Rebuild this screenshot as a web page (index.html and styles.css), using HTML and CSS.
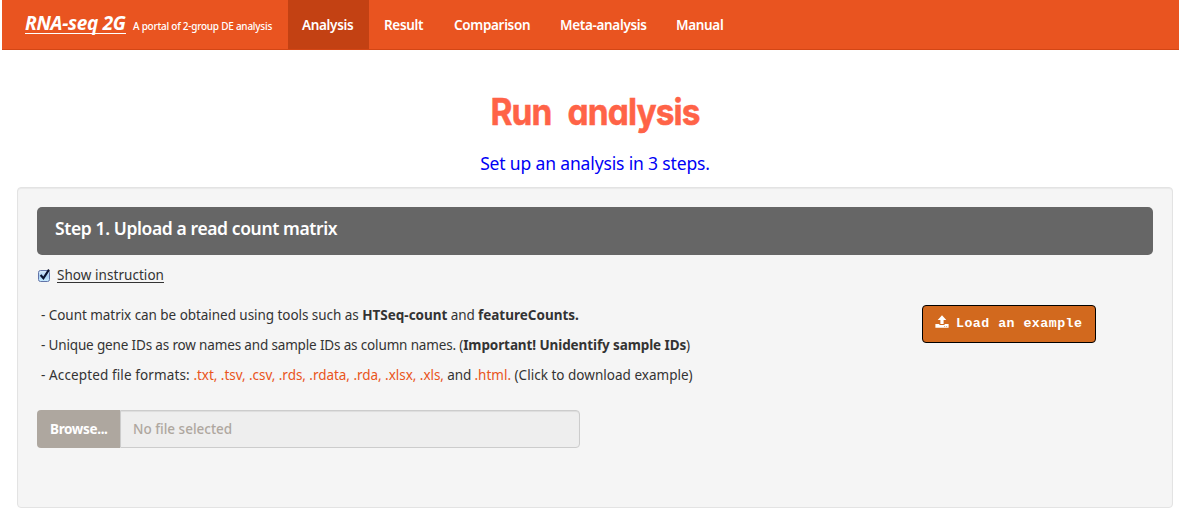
FILE: index.html
```html
<!DOCTYPE html>
<html lang="en">
<head>
<meta charset="utf-8">
<title>RNA-seq 2G</title>
<link rel="stylesheet" href="styles.css">
</head>
<body>
<nav class="navbar">
  <a class="brand"><span class="brand-name">RNA-seq 2G</span><span class="brand-tag">A portal of 2-group DE analysis</span></a>
  <a class="tab active t-analysis">Analysis</a>
  <a class="tab t-result">Result</a>
  <a class="tab t-comparison">Comparison</a>
  <a class="tab t-meta">Meta-analysis</a>
  <a class="tab t-manual">Manual</a>
</nav>
<main class="page">
  <h1 class="title">Run analysis</h1>
  <p class="lead"><span>Set up an analysis in 3 steps.</span></p>
  <section class="well">
    <h2 class="step"><span>Step 1. Upload a read count matrix</span></h2>
    <label class="toggle">
      <svg class="check" width="14" height="15" viewBox="0 0 14 15">
        <defs><linearGradient id="box" x1="0" y1="0" x2="0" y2="1"><stop offset="0" stop-color="#dcecfb"/><stop offset=".5" stop-color="#a9d0f5"/><stop offset="1" stop-color="#c8ecff"/></linearGradient></defs>
        <rect x="1.5" y="2.5" width="11" height="11" rx="2" fill="url(#box)" stroke="#6274a8"/>
        <path d="M3.6 7 6.4 10.2 12 1.6" fill="none" stroke="#0a1230" stroke-width="2.1"/>
      </svg>
      <span class="toggle-text">Show instruction</span>
    </label>
    <div class="columns">
      <div class="notes">
        <p><span class="intro-count">- Count matrix can be obtained using tools such as </span><b>HTSeq-count</b><span class="and"> and </span><b>featureCounts.</b></p>
        <p><span class="intro-ids">- Unique gene IDs as row names and sample IDs as column names. (</span><b class="important">Important! Unidentify sample IDs</b>)</p>
        <p><span class="intro-formats">- Accepted file formats: </span><a class="ext">.txt, .tsv, .csv, .rds, .rdata, .rda, .xlsx, .xls,</a><span class="and"> and </span><a class="html">.html.</a><span class="end"> (Click to download example)</span></p>
      </div>
      <button class="load">
        <svg width="14" height="14" viewBox="0 0 14 14" fill="#fff"><path d="M7 .3 11.3 5H8.6v4H5.4V5H2.7z"/><path d="M.4 8.9h4v1.2h5.2V8.9h4v3.9H.4zM9.3 10.9v.8h.8v-.8zm2 0v.8h.8v-.8z" fill-rule="evenodd"/></svg>
        <span>Load an example</span>
      </button>
    </div>
    <div class="upload"><span class="browse"><span>Browse...</span></span><span class="filename"><span>No file selected</span></span></div>
  </section>
</main>
</body>
</html>
```
FILE: styles.css
```css
* { box-sizing: border-box; }
body { margin: 0; background: #fff; color: #333; font: 13.5px/20px "Noto Sans", "Open Sans", sans-serif; overflow: hidden; }
h1, h2, p { margin: 0; }
.navbar { display: flex; height: 50px; margin-left: 2px; background: #e95420; border-bottom: 1px solid #d34615; color: #fff; white-space: nowrap; }
.brand { width: 286px; padding: 14px 0 0 23px; display: flex; align-items: baseline; }
.brand-name { width: 101px; margin-right: 7px; font-size: 19px; font-weight: 700; font-style: italic; letter-spacing: -0.3px; border-bottom: 1px solid #fff; line-height: 19px; height: 20px; }
.brand-tag { font-size: 10px; font-weight: 500; letter-spacing: -0.25px; }
.tab { height: 49px; padding: 15px 0 0 14px; font-weight: 600; letter-spacing: -0.33px; }
.active { background: #c34113; }
.t-analysis { width: 81px; }
.t-result { width: 71px; padding-left: 15px; }
.t-comparison { width: 106px; }
.t-meta { width: 116px; }
.t-manual { width: 80px; }
.page { padding: 0 6px 0 17px; }
.title { margin-top: 37px; height: 50px; line-height: 49px; text-align: center; color: #ff6347; font-family: Inter, sans-serif; font-size: 37px; font-weight: 700; font-feature-settings: "cv11"; word-spacing: 10px; letter-spacing: -1px; white-space: nowrap; transform: scaleX(.905); -webkit-text-stroke: .5px #ff6347; }
.lead { height: 50px; padding-top: 16px; text-align: center; color: #0000f5; font-size: 17.5px; letter-spacing: -0.15px; }
.well { height: 321px; padding: 19px; background: #f5f5f5; border: 1px solid #e3e3e3; border-radius: 4px; box-shadow: inset 0 1px 1px rgba(0,0,0,.05); }
.step { height: 48px; padding: 11px 18px; background: #666; border-radius: 5px; color: #fff; font-size: 17.5px; line-height: 20px; font-weight: 600; letter-spacing: -0.39px; white-space: nowrap; }
.toggle { display: flex; height: 20px; margin-top: 10px; }
.check { margin: 3px 6px 0 0; }
.toggle-text { height: 18px; border-bottom: 1px solid #333; letter-spacing: .05px; }
.columns { display: flex; justify-content: space-between; height: 125px; padding: 20px 57px 0 4px; }
.notes p { height: 30px; white-space: pre; }
.notes .and { letter-spacing: -0.15px; }
.intro-count { letter-spacing: -0.05px; }
.intro-ids { letter-spacing: -0.155px; }
.intro-formats { letter-spacing: 0.12px; }
.important { letter-spacing: -0.1px; }
.ext { letter-spacing: -0.04px; }
.end { letter-spacing: 0.02px; }
.ext, .html { color: #e95420; }
.load { display: flex; align-items: center; width: 174px; height: 38px; padding: 0 12px; border: 1px solid #000; border-radius: 4px; background: #d2691e; color: #fff; font: 700 13.3px/20px "Liberation Mono", monospace; letter-spacing: .45px; white-space: nowrap; }
.load svg { margin: -4px 7px 0 0; flex: none; }
.upload { display: flex; width: 543px; height: 38px; }
.browse { width: 83px; padding: 9px 0 0 13px; border-radius: 4px 0 0 4px; background: #aea79f; color: #fff; font-weight: 700; letter-spacing: -0.35px; }
.filename { flex: 1; padding: 8px 0 0 12px; border: 1px solid #ccc; border-radius: 0 4px 4px 0; background: #eee; color: #aea79f; box-shadow: inset 0 1px 1px rgba(0,0,0,.075); font-weight: 500; }
```
